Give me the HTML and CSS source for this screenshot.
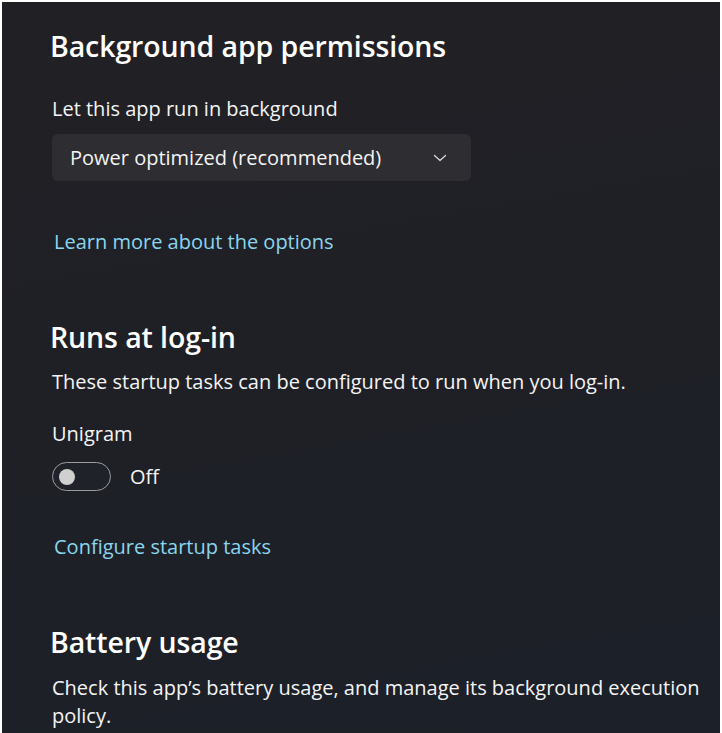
FILE: index.html
```html
<!DOCTYPE html>
<html>
<head>
<meta charset="utf-8">
<link rel="stylesheet" href="styles.css">
</head>
<body>
<div class="panel">
  <h2 class="title t1">Background app permissions</h2>
  <div class="label l1">Let this app run in background</div>
  <div class="select">
    <span>Power optimized (recommended)</span>
    <svg class="chev" width="14" height="8" viewBox="0 0 14 8"><path d="M1.5 1.5 L7 6.5 L12.5 1.5" fill="none" stroke="#d8d8d8" stroke-width="1.3" stroke-linecap="round" stroke-linejoin="round"/></svg>
  </div>
  <a class="link lk1">Learn more about the options</a>
  <h2 class="title t2">Runs at log-in</h2>
  <div class="label l2">These startup tasks can be configured to run when you log-in.</div>
  <div class="label l3">Unigram</div>
  <div class="toggle-row">
    <div class="toggle"><div class="thumb"></div></div>
    <span class="state">Off</span>
  </div>
  <a class="link lk2">Configure startup tasks</a>
  <h2 class="title t3">Battery usage</h2>
  <div class="label l4">Check this app’s battery usage, and manage its background execution policy.</div>
</div>
</body>
</html>
```
FILE: styles.css
```css
html, body { margin: 0; padding: 0; }
body {
  background: #ffffff;
  width: 722px;
  height: 733px;
  overflow: hidden;
  font-family: "Open Sans", "Noto Sans", sans-serif;
  color: #ffffff;
}
.panel {
  margin: 2px 2px 0 2px;
  height: 731px;
  box-sizing: border-box;
  padding: 27px 0 0 48px;
  background: linear-gradient(170deg, #212025 0%, #1f2026 45%, #1c2028 100%);
  display: flex;
  flex-direction: column;
  align-items: flex-start;
}
.title {
  margin: 0;
  font-size: 28.5px;
  line-height: 34px;
  font-weight: 600;
  letter-spacing: -0.1px;
}
.label {
  font-size: 20px;
  line-height: 24px;
  margin-left: 2px;
  color: #f4f4f4;
}
.l1 { margin-top: 34px; }
.select {
  margin-top: 13px;
  margin-left: 2px;
  width: 419px;
  height: 47px;
  box-sizing: border-box;
  background: #2d2d32;
  border-radius: 6px;
  display: flex;
  align-items: center;
  justify-content: space-between;
  padding: 0 24px 0 18px;
  font-size: 20px;
  color: #f4f4f4;
}
.chev { display: block; }
.link {
  font-size: 20px;
  line-height: 24px;
  margin-left: 4px;
  color: #8ad6ee;
}
.lk1 { margin-top: 49px; }
.t2 { margin-top: 66px; }
.l2 { margin-top: 16px; }
.l3 { margin-top: 28px; }
.toggle-row {
  margin-top: 16px;
  margin-left: 2px;
  display: flex;
  align-items: center;
  gap: 19px;
}
.toggle {
  width: 59px;
  height: 29px;
  box-sizing: border-box;
  border: 1.5px solid #9c9c9c;
  border-radius: 15px;
  background: #1f2228;
  display: flex;
  align-items: center;
  padding-left: 6px;
}
.thumb {
  width: 16px;
  height: 16px;
  border-radius: 50%;
  background: #d0d0d0;
}
.state {
  font-size: 20px;
  line-height: 24px;
  color: #f4f4f4;
}
.lk2 { margin-top: 44px; }
.t3 { margin-top: 66px; }
.l4 { margin-top: 15px; line-height: 28px; width: 660px; }
```
